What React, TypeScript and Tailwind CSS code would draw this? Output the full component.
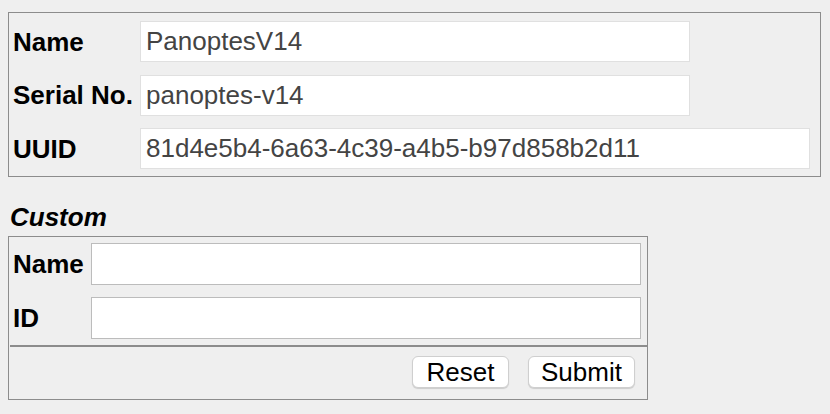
import React from 'react';

const font = { fontFamily: '"Liberation Sans", Arial, sans-serif' };

interface FieldRowProps {
    label: string;
    value?: string;
    inputClass: string;
}

function DeviceRow({ label, value, inputClass }: FieldRowProps) {
    return (
        <div className="flex items-center h-[41px]">
            <span className="w-[127px] font-bold text-[26px] text-black leading-none">{label}</span>
            <input
                readOnly
                value={value}
                className={`h-[41px] bg-white border border-[#e0e0e0] pl-[5px] text-[26px] text-[#444] outline-none ${inputClass}`}
                style={font}
            />
        </div>
    );
}

function CustomRow({ label }: { label: string }) {
    return (
        <div className="flex items-center h-[42px]">
            <span className="w-[78px] font-bold text-[26px] text-black leading-none">{label}</span>
            <input
                className="h-[42px] w-[550px] bg-white border border-[#bcbcbc] px-[5px] text-[26px] outline-none"
                style={font}
            />
        </div>
    );
}

export default function App() {
    return (
        <div className="min-h-[414px] bg-[#efefef] pt-[12px] pl-[8px]" style={font}>
            {/* Device info */}
            <div className="w-[813px] border border-[#8c8c8c] pt-[8px] pb-[7px] pl-[4px] flex flex-col gap-[12.5px]">
                <DeviceRow label="Name" value="PanoptesV14" inputClass="w-[550px]" />
                <DeviceRow label="Serial No." value="panoptes-v14" inputClass="w-[550px]" />
                <DeviceRow label="UUID" value="81d4e5b4-6a63-4c39-a4b5-b97d858b2d11" inputClass="w-[670px]" />
            </div>

            {/* Custom */}
            <h3 className="mt-[27px] ml-[2px] text-[26px] font-bold italic text-black leading-[26px]">Custom</h3>
            <div className="mt-[6px] w-[640px] border border-[#8c8c8c]">
                <div className="pt-[6px] pb-[6px] pl-[4px] flex flex-col gap-[12px]">
                    <CustomRow label="Name" />
                    <CustomRow label="ID" />
                </div>
                <div className="ml-[1px] border-t-2 border-[#8c8c8c] flex justify-end gap-[19px] pt-[9px] pb-[11px] pr-[12px]">
                    <button className="w-[97px] h-[32px] bg-white border border-[#cfcfcf] rounded-[6px] shadow-[0_1px_1px_rgba(0,0,0,0.15)] text-[26px] text-black leading-none">
                        Reset
                    </button>
                    <button className="w-[107px] h-[32px] bg-white border border-[#cfcfcf] rounded-[6px] shadow-[0_1px_1px_rgba(0,0,0,0.15)] text-[26px] text-black leading-none">
                        Submit
                    </button>
                </div>
            </div>
        </div>
    );
}
